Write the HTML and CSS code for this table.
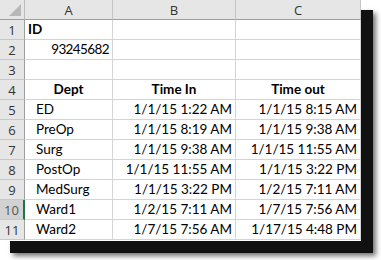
FILE: index.html
```html
<!DOCTYPE html>
<html>
<head>
<meta charset="utf-8">
<link rel="stylesheet" href="styles.css">
</head>
<body>
<div class="sheet">
  <div class="corner"><span class="tri"></span></div>
  <div class="colhead">A</div>
  <div class="colhead">B</div>
  <div class="colhead">C</div>

  <div class="rowhead">1</div><div class="cell bold">ID</div><div class="cell"></div><div class="cell"></div>
  <div class="rowhead">2</div><div class="cell right tight">93245682</div><div class="cell"></div><div class="cell"></div>
  <div class="rowhead">3</div><div class="cell"></div><div class="cell"></div><div class="cell"></div>
  <div class="rowhead">4</div><div class="cell bold center">Dept</div><div class="cell bold center">Time In</div><div class="cell bold center">Time out</div>
  <div class="rowhead">5</div><div class="cell indent">ED</div><div class="cell right">1/1/15 1:22 AM</div><div class="cell right">1/1/15 8:15 AM</div>
  <div class="rowhead">6</div><div class="cell indent">PreOp</div><div class="cell right">1/1/15 8:19 AM</div><div class="cell right">1/1/15 9:38 AM</div>
  <div class="rowhead">7</div><div class="cell indent">Surg</div><div class="cell right">1/1/15 9:38 AM</div><div class="cell right">1/1/15 11:55 AM</div>
  <div class="rowhead">8</div><div class="cell indent">PostOp</div><div class="cell right">1/1/15 11:55 AM</div><div class="cell right">1/1/15 3:22 PM</div>
  <div class="rowhead">9</div><div class="cell indent">MedSurg</div><div class="cell right">1/1/15 3:22 PM</div><div class="cell right">1/2/15 7:11 AM</div>
  <div class="rowhead active">10</div><div class="cell indent">Ward1</div><div class="cell right">1/2/15 7:11 AM</div><div class="cell right">1/7/15 7:56 AM</div>
  <div class="rowhead">11</div><div class="cell indent">Ward2</div><div class="cell right">1/7/15 7:56 AM</div><div class="cell right">1/17/15 4:48 PM</div>
</div>
</body>
</html>
```
FILE: styles.css
```css
html, body {
  margin: 0;
  padding: 0;
  background: #ffffff;
}
body {
  min-height: 260px;
  min-width: 381px;
}
.sheet {
  display: grid;
  grid-template-columns: 25px 88px 123px 125px;
  grid-template-rows: repeat(12, 20px);
  width: 361px;
  height: 241px;
  background: #ffffff;
  box-shadow: 11px 11px 0 1px #111111, 14px 14px 5px 1px rgba(0, 0, 0, 0.55);
  font-family: Lato, "Open Sans", sans-serif;
  font-size: 13.5px;
  color: #000000;
}
.corner {
  background: #e6e6e6;
  border-right: 1px solid #bdbdbd;
  border-bottom: 1px solid #9e9e9e;
  position: relative;
}
.tri {
  position: absolute;
  right: 3px;
  bottom: 3px;
  width: 0;
  height: 0;
  border-left: 12px solid transparent;
  border-bottom: 12px solid #b8b8b8;
}
.colhead {
  background: #e6e6e6;
  border-right: 1px solid #c4c4c4;
  border-bottom: 1px solid #9e9e9e;
  display: flex;
  align-items: center;
  justify-content: center;
  font-family: "Open Sans", "Noto Sans", sans-serif;
  font-size: 13px;
  color: #333333;
}
.rowhead {
  background: #e6e6e6;
  border-right: 1px solid #9e9e9e;
  border-bottom: 1px solid #c8c8c8;
  display: flex;
  align-items: center;
  justify-content: center;
  font-family: "Open Sans", "Noto Sans", sans-serif;
  font-size: 13px;
  color: #333333;
}
.rowhead.active {
  background: #d2d2d2;
  border-right: 2px solid #217346;
  color: #555555;
}
.cell {
  border-right: 1px solid #d4d4d4;
  border-bottom: 1px solid #d4d4d4;
  display: flex;
  align-items: flex-end;
  padding: 0 3px 2px 3px;
  white-space: nowrap;
  line-height: 16px;
}
.bold { font-weight: 700; }
.right { justify-content: flex-end; }
.center { justify-content: center; }
.indent { padding-left: 11px; }
.tight { letter-spacing: -0.6px; }
```
